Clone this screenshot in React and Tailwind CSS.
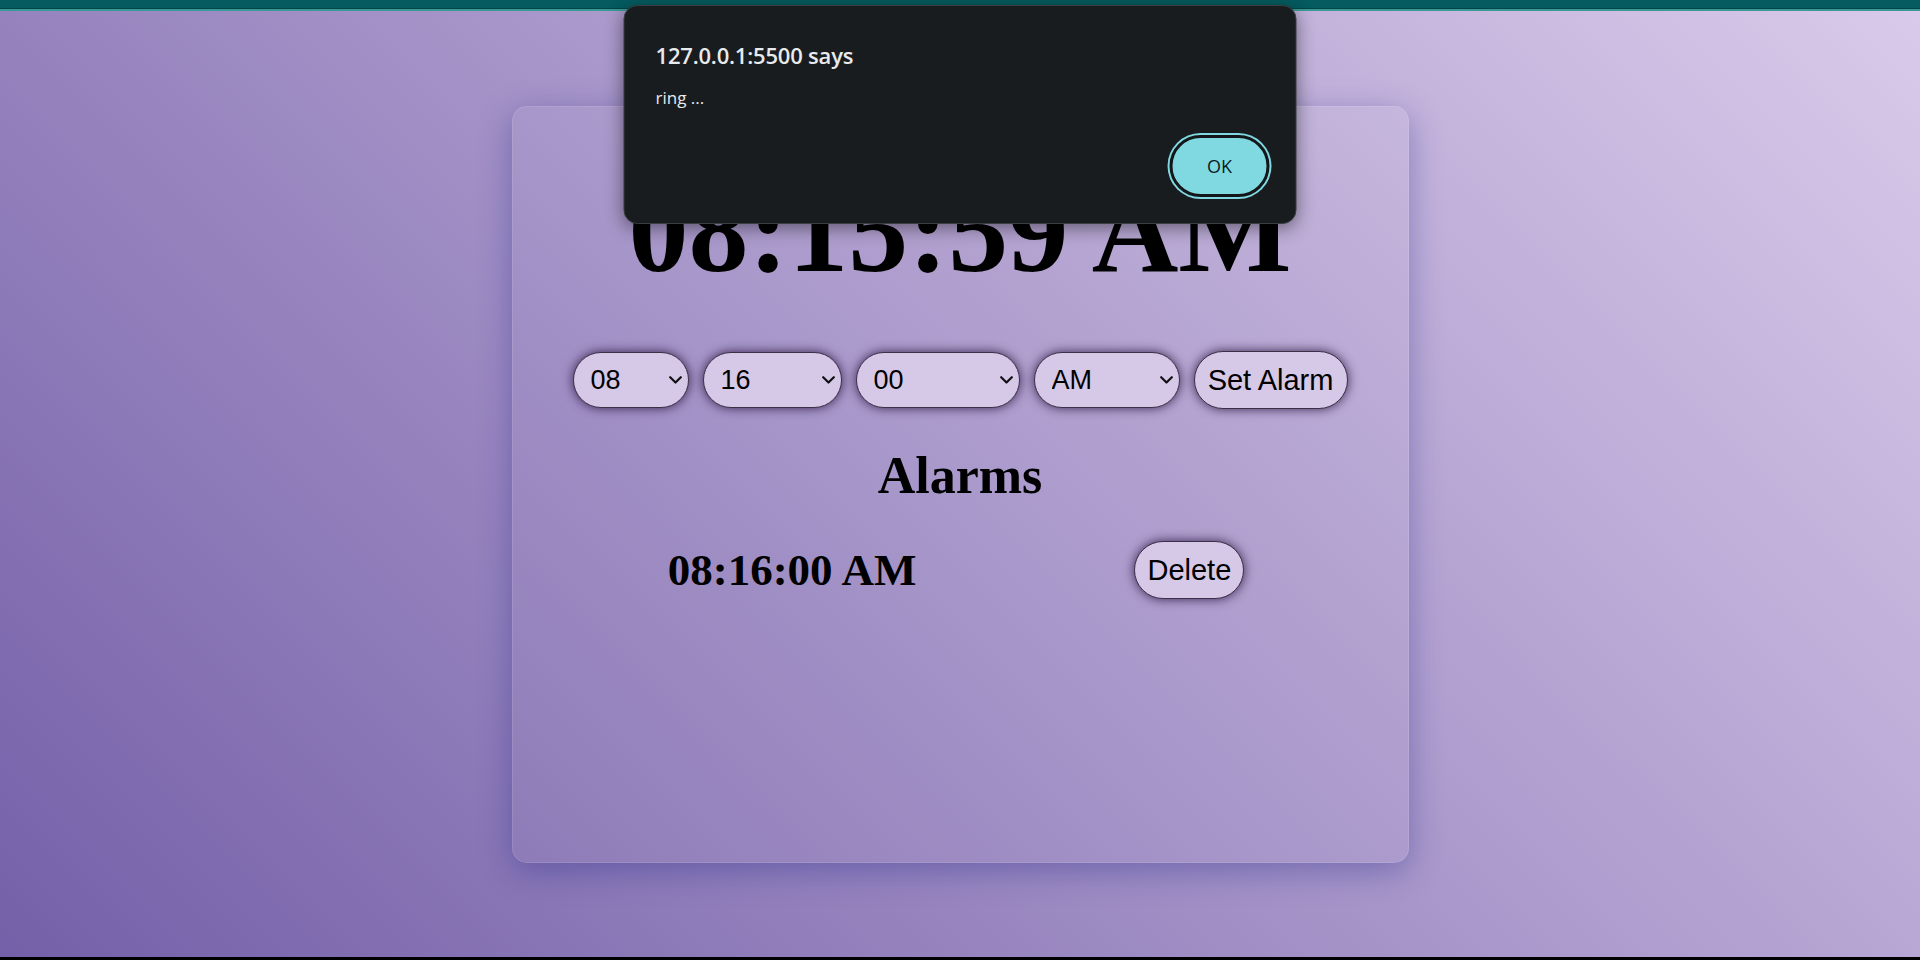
import React from "react";

const pad = (n) => String(n).padStart(2, "0");
const hours = Array.from({ length: 12 }, (_, i) => pad(i + 1));
const sixty = Array.from({ length: 60 }, (_, i) => pad(i));

function Chevron() {
    return (
        <svg
            className="pointer-events-none absolute right-[7px] top-1/2 -translate-y-1/2"
            width="13"
            height="8"
            viewBox="0 0 13 8"
            fill="none"
        >
            <path d="M1.2 1.2l5.3 5.3 5.3-5.3" stroke="#111" strokeWidth="2.2" strokeLinecap="round" strokeLinejoin="round" />
        </svg>
    );
}

function Picker({ value, options, width }) {
    return (
        <div className={`relative ${width}`}>
            <select
                defaultValue={value}
                className="h-[56px] w-full appearance-none rounded-full border border-[#3b3048] bg-[#d6c8e7] pl-[17px] text-[27px] leading-none text-black shadow-[0_0_11px_rgba(25,5,45,0.8)] outline-none"
                style={{ fontFamily: '"Liberation Sans", Arial, sans-serif' }}
            >
                {options.map((o) => (
                    <option key={o} value={o}>
                        {o}
                    </option>
                ))}
            </select>
            <Chevron />
        </div>
    );
}

function AlertDialog() {
    return (
        <div
            className="absolute left-1/2 top-[5px] flex h-[219px] w-[673px] -translate-x-1/2 flex-col rounded-[14px] border border-[#3a3e41] bg-[#181c1f] pl-[31px] pr-[26px] pb-[26px] pt-[37px] shadow-[0_4px_18px_rgba(0,0,0,0.45)]"
            style={{ fontFamily: '"Open Sans", "Noto Sans", sans-serif' }}
        >
            <div className="text-[22px] font-semibold leading-[24px] tracking-[-0.2px] text-[#e8eaed]">127.0.0.1:5500 says</div>
            <div className="mt-[20px] text-[17px] leading-[22px] text-[#e8eaed]">ring ...</div>
            <div className="flex flex-1 items-end justify-end">
                <button className="h-[62px] w-[100px] rounded-full border-[3px] border-[#13171a] bg-[#80d9e1] text-[18px] text-[#0d1c1f] shadow-[0_0_0_2px_#80d9e1]">
                    OK
                </button>
            </div>
        </div>
    );
}

export default function App() {
    const serif = { fontFamily: '"Liberation Serif", "Times New Roman", serif' };
    const sans = { fontFamily: '"Liberation Sans", Arial, sans-serif' };

    return (
        <div className="relative flex h-[960px] w-full flex-col overflow-hidden">
            <div className="h-[8px] bg-[#055b60]"></div>
            <div className="h-[1px] bg-[#034549]"></div>
            <div className="h-[2px] bg-[#3b9995]"></div>

            <main className="flex flex-1 justify-center bg-[linear-gradient(45deg,#7460a8,#d9caea)] pt-[95px]">
                <div className="flex h-[757px] w-[897px] flex-col items-center rounded-[15px] border border-white/10 bg-white/[0.04] pt-[57px] shadow-[0_8px_32px_rgba(31,38,135,0.37)]">
                    <h1 className="text-[120px] font-bold leading-[133px] text-black" style={serif}>
                        08:15:59 AM
                    </h1>

                    <div className="mt-[54px] flex items-center gap-[14px]">
                        <Picker value="08" options={hours} width="w-[116px]" />
                        <Picker value="16" options={sixty} width="w-[139px]" />
                        <Picker value="00" options={sixty} width="w-[164px]" />
                        <Picker value="AM" options={["AM", "PM"]} width="w-[146px]" />
                        <button
                            className="h-[58px] w-[154px] rounded-full border border-[#3b3048] bg-[#d6c8e7] text-[29px] leading-none text-black shadow-[0_0_11px_rgba(25,5,45,0.8)]"
                            style={sans}
                        >
                            Set Alarm
                        </button>
                    </div>

                    <h2 className="mt-[37px] text-[52px] font-bold leading-[60px] text-black" style={serif}>
                        Alarms
                    </h2>

                    <ul className="mt-[35px] pr-[8px]">
                        <li className="flex items-center gap-[218px]">
                            <span className="text-[45px] font-bold leading-[49px] text-black" style={serif}>
                                08:16:00 AM
                            </span>
                            <button
                                className="h-[58px] w-[110px] rounded-full border border-[#3b3048] bg-[#d6c8e7] text-[29px] leading-none text-black shadow-[0_0_11px_rgba(25,5,45,0.8)]"
                                style={sans}
                            >
                                Delete
                            </button>
                        </li>
                    </ul>
                </div>
            </main>

            <div className="h-[3px] bg-black"></div>

            <AlertDialog />
        </div>
    );
}
